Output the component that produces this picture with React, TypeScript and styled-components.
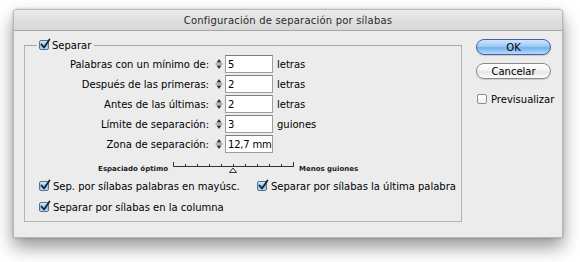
import { Fragment } from "react"
import styled, { createGlobalStyle } from "styled-components"

const Global = createGlobalStyle`
    html, body {
        margin: 0;
        background: #ffffff;
    }
    body {
        font-family: "DejaVu Sans", "Liberation Sans", sans-serif;
        font-size: 10px;
        color: #000;
    }
`

const Page = styled.div`
    padding: 9px 17px 0 13px;
    width: 580px;
    height: 262px;
    box-sizing: border-box;
`

const Window = styled.div`
    width: 550px;
    height: 229px;
    box-sizing: border-box;
    background: #ececec;
    border: 1px solid #b9b9b9;
    border-radius: 4px 4px 0 0;
    box-shadow: 0 9px 18px rgba(0, 0, 0, 0.42), 0 0 3px rgba(0, 0, 0, 0.2);
    display: flex;
    flex-direction: column;
    overflow: hidden;
`

const TitleBar = styled.div`
    height: 21px;
    box-sizing: border-box;
    background: linear-gradient(#ebebeb, #d6d6d6);
    border-bottom: 1px solid #a8a8a8;
    display: flex;
    align-items: center;
    justify-content: center;
    color: #2a2a2a;
    font-size: 10px;
    letter-spacing: 0.2px;
    padding-top: 1px;
`

const Body = styled.div`
    display: flex;
    padding: 0 0 0 10px;
    gap: 12px;
`

const Group = styled.fieldset`
    margin: 7px 0 0 0;
    width: 438px;
    height: 184px;
    box-sizing: border-box;
    border: 1px solid #b4b4b4;
    border-top-color: #a6a6a6;
    padding: 2px 0 0 0;
    display: flex;
    flex-direction: column;
`

const Legend = styled.legend`
    margin-left: 12px;
    padding: 0 3px 0 2px;
    display: flex;
    align-items: center;
    gap: 3px;
    height: 14px;
`

const FieldGrid = styled.div`
    display: grid;
    grid-template-columns: 188px 12px 48px auto;
    grid-auto-rows: 20px;
    align-items: center;
`

const Label = styled.span`
    text-align: right;
    padding-right: 4px;
    white-space: nowrap;
`

const Unit = styled.span`
    padding-left: 4px;
`

const Input = styled.div`
    height: 18px;
    box-sizing: border-box;
    background: #fff;
    border: 1px solid #9d9d9d;
    border-top-color: #7d7d7d;
    padding-left: 2px;
    display: flex;
    align-items: center;
    white-space: nowrap;
    overflow: hidden;
    letter-spacing: -0.2px;
`

const Spin = styled.div`
    height: 18px;
    display: flex;
    align-items: center;
    justify-content: center;
`

const SliderRow = styled.div`
    display: flex;
    align-items: flex-start;
    margin-top: 6px;
    height: 18px;
`

const SmallLabel = styled.span<{ $align: "left" | "right" }>`
    font-size: 7px;
    font-weight: bold;
    color: #222;
    width: ${p => (p.$align === "right" ? "143px" : "auto")};
    text-align: ${p => p.$align};
    margin-top: 5px;
    white-space: nowrap;
    padding-left: ${p => (p.$align === "left" ? "5px" : "0")};
`

const Track = styled.div`
    margin-left: 4px;
    width: 122px;
    height: 14px;
`

const CheckGrid = styled.div`
    display: grid;
    grid-template-columns: 218px auto;
    grid-auto-rows: 14px;
    row-gap: 7px;
    padding-left: 14px;
    margin-top: 1px;
`

const CheckLine = styled.label`
    display: flex;
    align-items: center;
    gap: 4px;
    white-space: nowrap;
    height: 14px;
`

const Box = styled.span<{ $on: boolean }>`
    width: 10px;
    height: 10px;
    box-sizing: border-box;
    border-radius: 2px;
    border: 1px solid ${p => (p.$on ? "#5a6f92" : "#8d8d8d")};
    background: ${p =>
        p.$on
            ? "linear-gradient(#d7ecfb, #8cc0ea 55%, #b7dcf7)"
            : "linear-gradient(#ffffff, #f0f0f0)"};
    position: relative;
    flex: none;
`

const Side = styled.div`
    display: flex;
    flex-direction: column;
    padding-top: 8px;
    width: 80px;
`

const Button = styled.div<{ $primary?: boolean }>`
    width: 75px;
    height: 16px;
    box-sizing: border-box;
    border-radius: 8px;
    border: 1px solid ${p => (p.$primary ? "#4a5aa8" : "#8a8a8a")};
    background: ${p =>
        p.$primary
            ? "linear-gradient(#cfe6fb 0%, #9ccaf2 45%, #74b2ec 55%, #b3dcfb 100%)"
            : "linear-gradient(#ffffff 0%, #f4f4f4 45%, #e6e6e6 55%, #fbfbfb 100%)"};
    display: flex;
    align-items: center;
    justify-content: center;
    font-size: 10px;
    margin-bottom: 8px;
    margin-left: 2px;
    box-shadow: 0 1px 1px rgba(0, 0, 0, 0.15);
`

const SideCheck = styled(CheckLine)`
    margin-left: 3px;
    margin-top: 5px;
`

function CheckBox({ on }: { on: boolean }) {
    return (
        <Box $on={on}>
            {on && (
                <svg width="12" height="12" viewBox="0 0 12 12" style={{ position: "absolute", left: -1, top: -3 }}>
                    <path d="M2.5 6.5 L5 9.5 L10.5 1.5" fill="none" stroke="#1b2433" strokeWidth="1.8" strokeLinecap="round" strokeLinejoin="round" />
                </svg>
            )}
        </Box>
    )
}

function Spinner() {
    return (
        <Spin>
            <svg width="10" height="16" viewBox="0 0 10 16">
                <path d="M5 3 L7.5 6.5 L2.5 6.5 Z" fill="#333" />
                <line x1="1.5" y1="8" x2="8.5" y2="8" stroke="#777" strokeWidth="1" />
                <path d="M5 13 L7.5 9.5 L2.5 9.5 Z" fill="#333" />
            </svg>
        </Spin>
    )
}

function Scale() {
    const ticks = Array.from({ length: 11 }, (_, i) => 1 + i * 12)
    return (
        <Track>
            <svg width="122" height="14" viewBox="0 0 122 14">
                <line x1="1" y1="6.5" x2="121" y2="6.5" stroke="#333" strokeWidth="1" />
                {ticks.map((x, i) => (
                    <line key={i} x1={x + 0.5} y1={i === 0 || i === 10 ? 2 : 4} x2={x + 0.5} y2="7" stroke="#333" strokeWidth="1" />
                ))}
                <path d="M61 8 L64.5 12.5 L57.5 12.5 Z" fill="#f4f4f4" stroke="#333" strokeWidth="1" />
            </svg>
        </Track>
    )
}

const fields = [
    { label: "Palabras con un mínimo de:", value: "5", unit: "letras" },
    { label: "Después de las primeras:", value: "2", unit: "letras" },
    { label: "Antes de las últimas:", value: "2", unit: "letras" },
    { label: "Límite de separación:", value: "3", unit: "guiones" },
    { label: "Zona de separación:", value: "12,7 mm", unit: "" },
]

export default function App() {
    return (
        <Page>
            <Global />
            <Window>
                <TitleBar>Configuración de separación por sílabas</TitleBar>
                <Body>
                    <Group>
                        <Legend>
                            <CheckBox on />
                            Separar
                        </Legend>
                        <FieldGrid>
                            {fields.map(f => (
                                <Fragment key={f.label}>
                                    <Label>{f.label}</Label>
                                    <Spinner />
                                    <Input>{f.value}</Input>
                                    <Unit>{f.unit}</Unit>
                                </Fragment>
                            ))}
                        </FieldGrid>
                        <SliderRow>
                            <SmallLabel $align="right">Espaciado óptimo</SmallLabel>
                            <Scale />
                            <SmallLabel $align="left">Menos guiones</SmallLabel>
                        </SliderRow>
                        <CheckGrid>
                            <CheckLine>
                                <CheckBox on />
                                Sep. por sílabas palabras en mayúsc.
                            </CheckLine>
                            <CheckLine>
                                <CheckBox on />
                                Separar por sílabas la última palabra
                            </CheckLine>
                            <CheckLine>
                                <CheckBox on />
                                Separar por sílabas en la columna
                            </CheckLine>
                        </CheckGrid>
                    </Group>
                    <Side>
                        <Button $primary>OK</Button>
                        <Button>Cancelar</Button>
                        <SideCheck>
                            <CheckBox on={false} />
                            Previsualizar
                        </SideCheck>
                    </Side>
                </Body>
            </Window>
        </Page>
    )
}
